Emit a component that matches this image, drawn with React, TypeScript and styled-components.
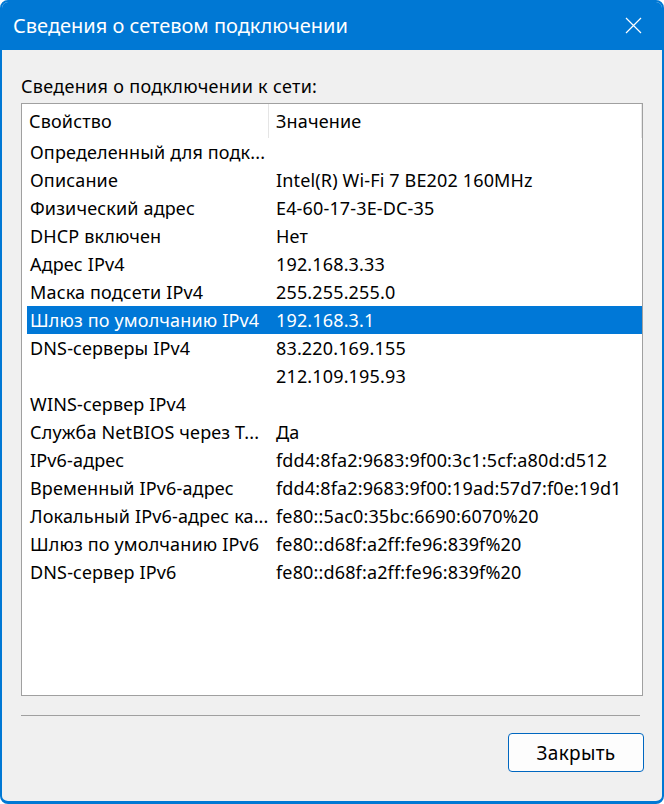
import styled, { createGlobalStyle } from 'styled-components'

const GlobalStyle = createGlobalStyle`
  html, body {
    margin: 0;
    padding: 0;
    background: #ffffff;
  }
  * {
    box-sizing: border-box;
  }
`

const Window = styled.div`
  width: 664px;
  height: 804px;
  display: flex;
  flex-direction: column;
  border: 2px solid #0078d4;
  border-bottom-width: 3px;
  border-radius: 8px;
  overflow: hidden;
  background: #f0f0f0;
  font-family: 'Noto Sans', 'Open Sans', sans-serif;
  color: #000000;
`

const TitleBar = styled.div`
  height: 48px;
  flex: none;
  display: flex;
  align-items: center;
  justify-content: space-between;
  padding: 0 20px 2px 11px;
  background: #0078d4;
  color: #ffffff;
`

const Title = styled.div`
  font-size: 20px;
  font-weight: 400;
`

const CloseIcon = styled.svg`
  width: 17px;
  height: 17px;
  display: block;
`

const Body = styled.div`
  flex: 1;
  display: flex;
  flex-direction: column;
  padding: 24px 19px 0 19px;
`

const Label = styled.div`
  font-size: 18px;
  letter-spacing: 0.3px;
  line-height: 24px;
  height: 25px;
  margin-bottom: 4px;
`

const ListBox = styled.div`
  height: 593px;
  flex: none;
  border: 1px solid #a0a0a0;
  background: #ffffff;
  display: flex;
  flex-direction: column;
  font-size: 18px;
  letter-spacing: 0.15px;
`

const HeaderRow = styled.div`
  height: 34px;
  flex: none;
  display: grid;
  grid-template-columns: 247px 1fr 1px;
`

const HeaderCell = styled.div<{ $divider?: boolean }>`
  display: flex;
  align-items: center;
  padding-left: 7px;
  border-right: ${(p) => (p.$divider ? '1px solid #e5e5e5' : 'none')};
`

const HeaderEnd = styled.div`
  background: #e8e8e8;
`

const Row = styled.div<{ $selected?: boolean }>`
  height: 28px;
  flex: none;
  margin-left: 5px;
  display: grid;
  grid-template-columns: 242px 1fr;
  align-items: center;
  background: ${(p) => (p.$selected ? '#0078d7' : 'transparent')};
  color: ${(p) => (p.$selected ? '#ffffff' : '#000000')};
`

const Cell = styled.div<{ $value?: boolean }>`
  padding-left: ${(p) => (p.$value ? '7px' : '3px')};
  white-space: nowrap;
  overflow: hidden;
`

const Separator = styled.div`
  height: 1px;
  margin: 19px 3px 0 0;
  background: #a0a0a0;
`

const Footer = styled.div`
  display: flex;
  justify-content: flex-end;
  padding-top: 17px;
`

const Button = styled.button`
  width: 136px;
  height: 39px;
  border: 1px solid #0067c0;
  border-radius: 4px;
  background: #fdfdfd;
  font-family: inherit;
  font-size: 19px;
  letter-spacing: 0.3px;
  color: #000000;
  margin-right: -1px;
`

const rows: { name: string; value: string; selected?: boolean }[] = [
  { name: 'Определенный для подк...', value: '' },
  { name: 'Описание', value: 'Intel(R) Wi-Fi 7 BE202 160MHz' },
  { name: 'Физический адрес', value: 'E4-60-17-3E-DC-35' },
  { name: 'DHCP включен', value: 'Нет' },
  { name: 'Адрес IPv4', value: '192.168.3.33' },
  { name: 'Маска подсети IPv4', value: '255.255.255.0' },
  { name: 'Шлюз по умолчанию IPv4', value: '192.168.3.1', selected: true },
  { name: 'DNS-серверы IPv4', value: '83.220.169.155' },
  { name: '', value: '212.109.195.93' },
  { name: 'WINS-сервер IPv4', value: '' },
  { name: 'Служба NetBIOS через Т...', value: 'Да' },
  { name: 'IPv6-адрес', value: 'fdd4:8fa2:9683:9f00:3c1:5cf:a80d:d512' },
  { name: 'Временный IPv6-адрес', value: 'fdd4:8fa2:9683:9f00:19ad:57d7:f0e:19d1' },
  { name: 'Локальный IPv6-адрес ка...', value: 'fe80::5ac0:35bc:6690:6070%20' },
  { name: 'Шлюз по умолчанию IPv6', value: 'fe80::d68f:a2ff:fe96:839f%20' },
  { name: 'DNS-сервер IPv6', value: 'fe80::d68f:a2ff:fe96:839f%20' },
]

export default function App() {
  return (
    <>
      <GlobalStyle />
      <Window>
        <TitleBar>
          <Title>Сведения о сетевом подключении</Title>
          <CloseIcon viewBox="0 0 17 17">
            <path d="M1 1 L16 16 M16 1 L1 16" stroke="#ffffff" strokeWidth="1.2" fill="none" />
          </CloseIcon>
        </TitleBar>
        <Body>
          <Label>Сведения о подключении к сети:</Label>
          <ListBox>
            <HeaderRow>
              <HeaderCell $divider>Свойство</HeaderCell>
              <HeaderCell>Значение</HeaderCell>
              <HeaderEnd />
            </HeaderRow>
            {rows.map((r, i) => (
              <Row key={i} $selected={r.selected}>
                <Cell>{r.name}</Cell>
                <Cell $value>{r.value}</Cell>
              </Row>
            ))}
          </ListBox>
          <Separator />
          <Footer>
            <Button>Закрыть</Button>
          </Footer>
        </Body>
      </Window>
    </>
  )
}
